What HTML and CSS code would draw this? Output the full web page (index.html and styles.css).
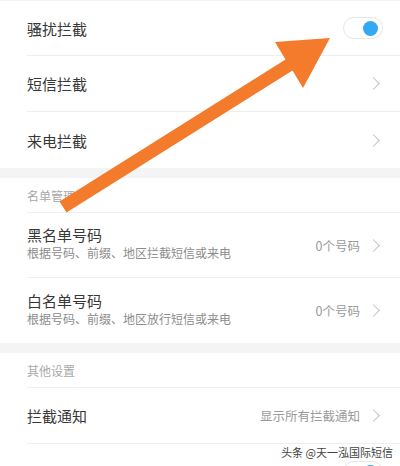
FILE: index.html
```html
<!DOCTYPE html>
<html lang="zh-CN">
<head>
  <meta charset="UTF-8">
  <meta name="viewport" content="width=device-width, initial-scale=1.0">
  <title>骚扰拦截设置</title>
  <link rel="stylesheet" href="styles.css">
</head>
<body>

<div class="page">
  <section class="group">
    <div class="row">
      <div class="row-inner">
        <span class="title">骚扰拦截</span>
        <span class="switch on"><span class="knob"></span></span>
      </div>
    </div>
    <div class="row">
      <div class="row-inner">
        <span class="title">短信拦截</span>
        <span class="chevron"></span>
      </div>
    </div>
    <div class="row last">
      <div class="row-inner">
        <span class="title">来电拦截</span>
        <span class="chevron"></span>
      </div>
    </div>
  </section>

  <div class="gap"></div>

  <section class="group">
    <div class="head"><div class="head-inner">名单管理</div></div>
    <div class="row tall">
      <div class="row-inner">
        <div class="text">
          <span class="title">黑名单号码</span>
          <span class="sub">根据号码、前缀、地区拦截短信或来电</span>
        </div>
        <span class="value">0个号码</span>
        <span class="chevron"></span>
      </div>
    </div>
    <div class="row tall last">
      <div class="row-inner">
        <div class="text">
          <span class="title">白名单号码</span>
          <span class="sub">根据号码、前缀、地区放行短信或来电</span>
        </div>
        <span class="value">0个号码</span>
        <span class="chevron"></span>
      </div>
    </div>
  </section>

  <div class="gap"></div>

  <section class="group">
    <div class="head"><div class="head-inner">其他设置</div></div>
    <div class="row">
      <div class="row-inner">
        <span class="title">拦截通知</span>
        <span class="value">显示所有拦截通知</span>
        <span class="chevron"></span>
      </div>
    </div>
    <div class="row last">
      <div class="row-inner">
        <span class="title">自动更新拦截库</span>
        <span class="switch on"><span class="knob"></span></span>
      </div>
    </div>
  </section>

  <!-- big orange pointer drawn over the list -->
  <svg class="pointer" width="400" height="466" viewBox="0 0 400 466">
    <polygon points="59.5,201.5 285.5,59.5 275,42 330,38 303,88 292.5,70.5 66.5,212.5" fill="#f47b2c"/>
  </svg>

  <div class="mark">头条 @天一泓国际短信</div>
</div>

</body>
</html>
```

FILE: styles.css
```css
body {
  margin: 0;
  background: #fff;
  font-family: "Noto Sans CJK SC", "Noto Sans", sans-serif;
  color: #333;
}
.page {
  position: relative;
  width: 400px;
  height: 466px;
  overflow: hidden;
}
.group {
  background: #fff;
}
.gap {
  height: 10px;
  background: #f4f4f4;
}
.row, .head {
  padding-left: 27px;
}
.row-inner {
  height: 55px;
  border-bottom: 1px solid #eeeeee;
  padding-right: 18px;
  display: flex;
  align-items: center;
}
.group:first-child .row:first-child {
  border-top: 1px solid #f3f3f3;
}
.group:first-child .row:first-child .row-inner {
  height: 54px;
}
.row.tall .row-inner {
  height: 64px;
}
.row.last .row-inner {
  border-bottom: none;
  height: 56px;
}
.row.tall.last .row-inner {
  height: 65px;
}
.head-inner {
  height: 33px;
  border-bottom: 1px solid #eeeeee;
  display: flex;
  align-items: center;
  font-size: 12px;
  color: #a8a8a8;
  padding-top: 1px;
}
.title {
  font-size: 15px;
  color: #383838;
  flex: 1;
}
.text {
  flex: 1;
  display: flex;
  flex-direction: column;
}
.text .title {
  line-height: 20px;
  margin-top: -4px;
}
.sub {
  font-size: 12px;
  color: #8c8c8c;
  line-height: 16px;
}
.value {
  font-size: 12.5px;
  color: #9a9a9a;
  margin-right: 9px;
}
.chevron {
  width: 8px;
  height: 8px;
  border-top: 1.3px solid #c2c2c2;
  border-right: 1.3px solid #c2c2c2;
  transform: rotate(45deg);
  margin-right: 4px;
}
.switch {
  width: 38px;
  height: 20px;
  border: 1px solid #e6e6e6;
  border-radius: 12px;
  background: #fff;
  display: flex;
  align-items: center;
  justify-content: flex-end;
  margin-right: -1px;
}
.group:last-child .switch {
  margin-top: 12px;
}
.knob {
  width: 15px;
  height: 15px;
  border-radius: 50%;
  background: #35a8f4;
  margin-right: 4px;
}
.pointer {
  position: absolute;
  top: 0;
  left: 0;
  pointer-events: none;
}
.mark {
  position: absolute;
  right: 7px;
  bottom: 6px;
  font-size: 11px;
  color: #444;
  text-shadow: 0 0 2px #fff, 0 0 2px #fff;
}
```
